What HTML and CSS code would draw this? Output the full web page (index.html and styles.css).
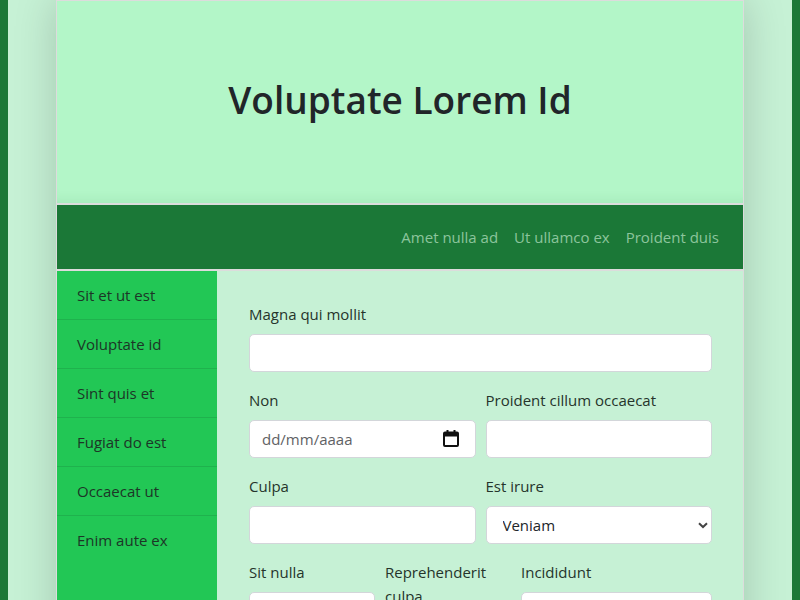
FILE: index.html
```html
<!DOCTYPE html>
<html lang="en">
<head>
<meta charset="utf-8">
<title>Voluptate Lorem Id</title>
<link rel="stylesheet" href="styles.css">
</head>
<body>
<div class="page">
  <header class="hero">
    <h1 class="hero-title">Voluptate Lorem Id</h1>
  </header>
  <nav class="topnav">
    <a class="topnav-link" href="#">Amet nulla ad</a>
    <a class="topnav-link" href="#">Ut ullamco ex</a>
    <a class="topnav-link" href="#">Proident duis</a>
  </nav>
  <div class="layout">
    <aside class="sidebar">
      <a class="side-item" href="#">Sit et ut est</a>
      <a class="side-item" href="#">Voluptate id</a>
      <a class="side-item" href="#">Sint quis et</a>
      <a class="side-item" href="#">Fugiat do est</a>
      <a class="side-item" href="#">Occaecat ut</a>
      <a class="side-item" href="#">Enim aute ex</a>
    </aside>
    <main class="content">
      <form class="form">
        <div class="field">
          <label class="label">Magna qui mollit</label>
          <input class="input" type="text">
        </div>
        <div class="row two">
          <div class="field">
            <label class="label">Non</label>
            <div class="date-wrap">
              <input class="input date" type="text" placeholder="dd/mm/aaaa">
              <svg class="cal" width="16" height="17" viewBox="0 0 16 17"><rect x="1" y="2.5" width="14" height="13.5" rx="1" fill="none" stroke="#111" stroke-width="2"/><rect x="1" y="2.5" width="14" height="4" fill="#111"/><rect x="3.5" y="0" width="2" height="3" fill="#111"/><rect x="10.5" y="0" width="2" height="3" fill="#111"/></svg>
            </div>
          </div>
          <div class="field">
            <label class="label">Proident cillum occaecat</label>
            <input class="input" type="text">
          </div>
        </div>
        <div class="row two">
          <div class="field">
            <label class="label">Culpa</label>
            <input class="input" type="text">
          </div>
          <div class="field">
            <label class="label">Est irure</label>
            <div class="select-wrap">
              <select class="input select">
                <option>Veniam</option>
              </select>
              <svg class="chev" width="10" height="7" viewBox="0 0 10 7"><path d="M1 1.2 L5 5 L9 1.2" fill="none" stroke="#444" stroke-width="2"/></svg>
            </div>
          </div>
        </div>
        <div class="row three">
          <div class="field">
            <label class="label">Sit nulla</label>
            <input class="input" type="text">
          </div>
          <div class="field">
            <label class="label">Reprehenderit culpa</label>
            <input class="input" type="text">
          </div>
          <div class="field">
            <label class="label">Incididunt</label>
            <input class="input" type="text">
          </div>
        </div>
      </form>
    </main>
  </div>
</div>
</body>
</html>
```

FILE: styles.css
```css
html {
  background: #1b7837;
}
body {
  margin: 0 8px;
  min-height: 600px;
  background: #c6f1d5;
  font-family: "Open Sans", "Noto Sans", sans-serif;
  font-size: 15px;
  color: #212529;
}
.page {
  width: 686px;
  margin: 0 auto;
  border: 1px solid #dcdcdc;
  box-shadow: 0 0 40px rgba(0, 0, 0, 0.18);
}
.hero {
  height: 197px;
  padding-bottom: 5px;
  background: #b3f6c8;
  display: flex;
  align-items: center;
  justify-content: center;
  border-bottom: 2px solid #dcdcdc;
  box-shadow: inset 0 -12px 14px -12px rgba(0, 90, 40, 0.12);
}
.hero-title {
  margin: 0;
  font-size: 37px;
  font-weight: 600;
  color: #212529;
}
.topnav {
  height: 64px;
  background: #1b7837;
  display: flex;
  justify-content: flex-end;
  align-items: center;
  padding-right: 16px;
  border-bottom: 2px solid #dcdcdc;
}
.topnav-link {
  color: #8cc59c;
  text-decoration: none;
  padding: 0 8px;
}
.layout {
  display: flex;
  min-height: 340px;
}
.sidebar {
  width: 160px;
  flex: none;
  background: #22c755;
  display: flex;
  flex-direction: column;
}
.side-item {
  height: 48px;
  border-bottom: 1px solid #1fb24d;
  padding-left: 20px;
  display: flex;
  align-items: center;
  color: #1d3527;
  text-decoration: none;
}
.side-item:last-child {
  border-bottom: 0;
}
.content {
  flex: 1;
  padding: 35px 31px 0 32px;
}
.form {
  display: flex;
  flex-direction: column;
  gap: 20px;
}
.row {
  display: grid;
  gap: 10px;
  align-items: start;
}
.two {
  grid-template-columns: 1fr 1fr;
}
.three {
  grid-template-columns: 126px 126px 1fr;
}
.field {
  display: flex;
  flex-direction: column;
}
.label {
  line-height: 24px;
  margin-top: -4px;
  margin-bottom: 8px;
  color: #25342b;
}
.input {
  box-sizing: border-box;
  width: 100%;
  height: 38px;
  border: 1px solid #d3d6da;
  border-radius: 5px;
  background: #fff;
  font: inherit;
  color: #212529;
  padding: 0 12px;
  margin: 0;
}
.date::placeholder {
  color: #5f6265;
}
.date-wrap,
.select-wrap {
  position: relative;
}
.cal {
  position: absolute;
  right: 17px;
  top: 10px;
}
.select {
  appearance: none;
  -webkit-appearance: none;
  padding-left: 16px;
}
.chev {
  position: absolute;
  right: 4px;
  top: 16px;
}
```
